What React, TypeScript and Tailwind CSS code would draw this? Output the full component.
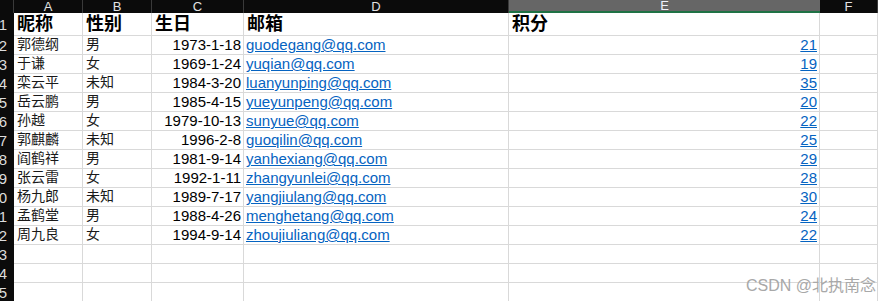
import React from 'react';

const COLS = 'grid grid-cols-[14px_69px_69px_92px_265px_311px_58px]';
const FONT = '"Liberation Sans", "Noto Sans CJK SC", sans-serif';

const rows: [string, string, string, string, string][] = [
    ['郭德纲', '男', '1973-1-18', 'guodegang@qq.com', '21'],
    ['于谦', '女', '1969-1-24', 'yuqian@qq.com', '19'],
    ['栾云平', '未知', '1984-3-20', 'luanyunping@qq.com', '35'],
    ['岳云鹏', '男', '1985-4-15', 'yueyunpeng@qq.com', '20'],
    ['孙越', '女', '1979-10-13', 'sunyue@qq.com', '22'],
    ['郭麒麟', '未知', '1996-2-8', 'guoqilin@qq.com', '25'],
    ['阎鹤祥', '男', '1981-9-14', 'yanhexiang@qq.com', '29'],
    ['张云雷', '女', '1992-1-11', 'zhangyunlei@qq.com', '28'],
    ['杨九郎', '未知', '1989-7-17', 'yangjiulang@qq.com', '30'],
    ['孟鹤堂', '男', '1988-4-26', 'menghetang@qq.com', '24'],
    ['周九良', '女', '1994-9-14', 'zhoujiuliang@qq.com', '22'],
];

const cell = 'border-r border-b border-[#d9d9d9] flex items-end pb-[1px] overflow-hidden whitespace-nowrap';

const RowNum = ({ n }: { n: number }) => (
    <div className="flex items-center justify-end overflow-hidden bg-[#0b0b0b] pr-[7px] text-[15px] leading-none text-[#dcdcdc]">
        <span>{n}</span>
    </div>
);

export default function App() {
    const letters = ['A', 'B', 'C', 'D', 'E', 'F'];
    return (
        <div className="relative h-[301px] w-[878px] overflow-hidden bg-white" style={{ fontFamily: FONT }}>
            {/* column headers */}
            <div className={`${COLS} h-[13px] bg-[#0b0b0b]`}>
                <div className="border-r border-[#3a3a3a]" />
                {letters.map((l) => (
                    <div
                        key={l}
                        className={
                            l === 'E'
                                ? 'flex items-center justify-center border-b-2 border-[#1f7245] bg-[#666666] text-[13px] leading-[11px] text-[#eef2fc]'
                                : 'flex items-center justify-center overflow-hidden border-r border-[#3a3a3a] text-[13px] leading-[13px] text-[#e2e2e2]'
                        }
                    >
                        {l}
                    </div>
                ))}
            </div>

            {/* title row */}
            <div className={`${COLS} h-[23px]`}>
                <RowNum n={1} />
                {['昵称', '性别', '生日', '邮箱', '积分'].map((t) => (
                    <div key={t} className={`${cell} pl-[3px] text-[18px] font-bold leading-[20px] text-black`}>
                        {t}
                    </div>
                ))}
                <div className={cell} />
            </div>

            {rows.map((r, i) => (
                <div key={r[0]} className={`${COLS} h-[19px]`}>
                    <RowNum n={i + 2} />
                    <div className={`${cell} pl-[3px] text-[14px] leading-[17px] text-[#1a1a1a]`}>{r[0]}</div>
                    <div className={`${cell} pl-[3px] text-[14px] leading-[17px] text-[#1a1a1a]`}>{r[1]}</div>
                    <div className={`${cell} justify-end pr-[2px] text-[15px] leading-[17px] text-black`}>{r[2]}</div>
                    <div className={`${cell} pl-[2px] text-[15px] leading-[17px] text-[#0563c1] underline`}>{r[3]}</div>
                    <div className={`${cell} justify-end pr-[2px] text-[15px] leading-[17px] text-[#0563c1] underline`}>{r[4]}</div>
                    <div className={cell} />
                </div>
            ))}

            {[13, 14, 15].map((n) => (
                <div key={n} className={`${COLS} h-[19px]`}>
                    <RowNum n={n} />
                    {[0, 1, 2, 3, 4, 5].map((c) => (
                        <div key={c} className={cell} />
                    ))}
                </div>
            ))}

            <div className="absolute bottom-[7px] right-[2px] text-[16px] leading-none text-[#a8a8a8]">
                CSDN @北执南念
            </div>
        </div>
    );
}
